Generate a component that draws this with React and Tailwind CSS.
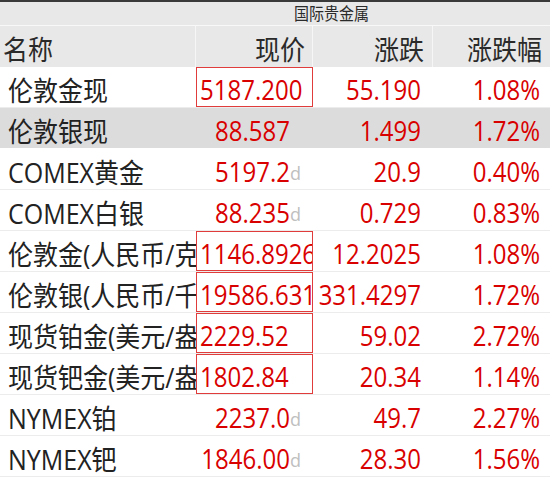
import React from "react";

const rows = [
  { name: "伦敦金现", price: "5187.200", box: true, chg: "55.190", pct: "1.08%" },
  { name: "伦敦银现", price: "88.587", chg: "1.499", pct: "1.72%", sel: true },
  { name: "COMEX黄金", price: "5197.2", d: true, chg: "20.9", pct: "0.40%" },
  { name: "COMEX白银", price: "88.235", d: true, chg: "0.729", pct: "0.83%" },
  { name: "伦敦金(人民币/克)", price: "1146.8926", box: true, chg: "12.2025", pct: "1.08%" },
  { name: "伦敦银(人民币/千克)", price: "19586.6313", box: true, chg: "331.4297", pct: "1.72%" },
  { name: "现货铂金(美元/盎司)", price: "2229.52", box: true, chg: "59.02", pct: "2.72%" },
  { name: "现货钯金(美元/盎司)", price: "1802.84", box: true, chg: "20.34", pct: "1.14%" },
  { name: "NYMEX铂", price: "2237.0", d: true, chg: "49.7", pct: "2.27%" },
  { name: "NYMEX钯", price: "1846.00", d: true, chg: "28.30", pct: "1.56%" },
];

const font = { fontFamily: '"Open Sans", "Noto Sans CJK SC", sans-serif' };

export default function App() {
  return (
    <div
      className="w-[550px] h-[479px] overflow-hidden bg-white text-[24px] leading-none text-[#222]"
      style={font}
    >
      <div className="h-[2px] bg-[#3a3a3a]" />
      <div className="h-[24px] bg-[#e8e8e8] border-b border-[#f8f8f8] flex items-center">
        <span className="ml-[294px] text-[15px] text-[#2a2a2a] inline-block scale-y-[1.1]">国际贵金属</span>
      </div>
      <div className="h-[41px] bg-[#e8e8e8] grid grid-cols-[196px_117px_120px_117px] text-[#2a2a2a] text-[25px]">
        <div className="border-r border-[#f6f6f6] flex items-center pl-[3px] pt-[6px]">
          <span className="inline-block scale-y-[1.1]">名称</span>
        </div>
        <div className="border-r border-[#f6f6f6] flex items-center justify-end pr-[7px] pt-[6px]">
          <span className="inline-block scale-y-[1.1]">现价</span>
        </div>
        <div className="border-r border-[#f6f6f6] flex items-center justify-end pr-[8px] pt-[6px]">
          <span className="inline-block scale-y-[1.1]">涨跌</span>
        </div>
        <div className="flex items-center justify-end pr-[8px] pt-[6px]">
          <span className="inline-block scale-y-[1.1]">涨跌幅</span>
        </div>
      </div>
      {rows.map((r, i) => (
        <div
          key={i}
          className={`h-[41px] grid grid-cols-[196px_117px_120px_117px] border-b ${
            r.sel ? "bg-[#dcdcdc] border-white" : "bg-white border-[#ececec]"
          }`}
        >
          <div className="flex items-center pl-[8px] pt-[6px] overflow-hidden whitespace-nowrap text-[25px]">
            <span className="inline-block scale-y-[1.1]">{r.name}</span>
          </div>
          {r.box ? (
            <div className="flex items-center pl-[3px] pt-[6px] overflow-hidden whitespace-nowrap text-[#d90000] border border-[#e03c3c]">
              <span className="inline-block scale-y-[1.1]">{r.price}</span>
            </div>
          ) : (
            <div className="flex items-center justify-end pr-[11px] pt-[6px] whitespace-nowrap text-[#d90000]">
              <span className="inline-block scale-y-[1.1]">{r.price}</span>
              <span className="inline-block w-[12px] text-[18px] text-[#c0c0c0] pt-[2px]">{r.d ? "d" : ""}</span>
            </div>
          )}
          <div className="flex items-center justify-end pr-[12px] pt-[6px] whitespace-nowrap text-[#d90000]">
            <span className="inline-block scale-y-[1.1]">{r.chg}</span>
          </div>
          <div className="flex items-center justify-end pr-[10px] pt-[6px] whitespace-nowrap text-[#d90000]">
            <span className="inline-block scale-y-[1.1]">{r.pct}</span>
          </div>
        </div>
      ))}
    </div>
  );
}
